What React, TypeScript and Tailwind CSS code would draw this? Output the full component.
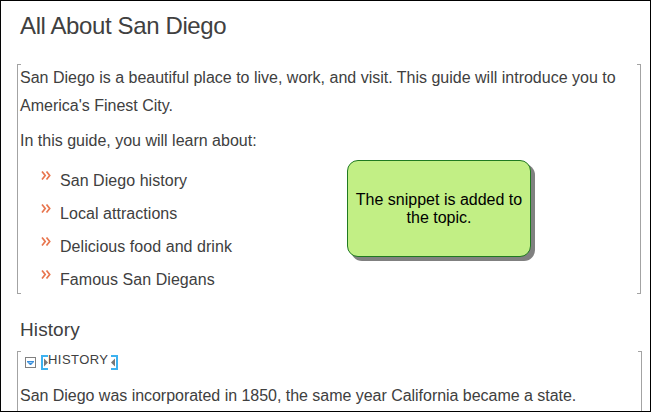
import type { ReactNode } from "react";

const topics = ["San Diego history", "Local attractions", "Delicious food and drink", "Famous San Diegans"];

function Chevrons() {
  return (
    <svg width="10" height="9" viewBox="0 0 10 9" fill="none" stroke="#e8764f" strokeWidth="1.7" className="mt-[-10px] shrink-0">
      <path d="M1 0.5 L4.2 4.5 L1 8.5 M5.5 0.5 L8.7 4.5 L5.5 8.5" />
    </svg>
  );
}

function Snippet({ children, className }: { children: ReactNode; className: string }) {
  return (
    <section className={`flex ${className}`}>
      <div className="w-1 shrink-0 border-y border-l border-[#a3a3a3]" />
      <div className="-ml-px min-w-0 flex-1 whitespace-nowrap">{children}</div>
      <div className="w-1 shrink-0 border-y border-r border-[#a3a3a3]" />
    </section>
  );
}

function SnippetTag() {
  return (
    <div className="flex h-[23px] pl-[5px] pt-[4px]">
      <svg width="11" height="11" viewBox="0 0 11 11" className="mt-[2px] shrink-0">
        <rect x="0.5" y="0.5" width="10" height="10" fill="#fff" stroke="#808080" />
        <path d="M2 4h7v1l-3 3h-1l-3-3z" fill="#3a8edb" />
        <path d="M3 5h5l-2 1h-1z" fill="#a9d5f5" />
      </svg>
      <svg width="7" height="15" viewBox="0 0 7 15" className="ml-[5px] shrink-0">
        <path d="M7 1H1V14H7" fill="none" stroke="#3db2f0" strokeWidth="2" />
        <path d="M3 3.5L7 7.5L3 11.5z" fill="#777" />
      </svg>
      <span className="mt-[-3px] w-[61px] text-[13px] leading-[16px] tracking-[0.45px]">HISTORY</span>
      <svg width="9" height="15" viewBox="0 0 9 15" className="shrink-0">
        <path d="M2 1H8V14H2" fill="none" stroke="#3db2f0" strokeWidth="2" />
        <path d="M6 3.5L2 7.5L6 11.5z" fill="#777" />
      </svg>
    </div>
  );
}

export default function App() {
  return (
    <main className="relative flex h-[412px] w-[651px] overflow-hidden border border-black bg-white font-['Liberation_Sans',Arial,sans-serif] text-base text-[#404040]">
      <div className="w-[9px] shrink-0 bg-[#fcfcfc]" />
      <div className="min-w-0 flex-1 pl-[7px]">
        <h1 className="ml-[3px] mt-[9px] h-[54px] text-2xl leading-[32px] tracking-[-0.38px]">All About San Diego</h1>
        <Snippet className="h-[230px] w-[624px]">
          <p className="leading-[28px]">
            San Diego is a beautiful place to live, work, and visit. This guide will introduce you to
            <br />
            America's Finest City.
          </p>
          <p className="mt-[7px] leading-[28px]">In this guide, you will learn about:</p>
          <ul className="mt-[9px] pl-[21px]">
            {topics.map((topic) => (
              <li key={topic} className="flex h-[33px] items-center gap-[9px]">
                <Chevrons />
                <span className="tracking-[0.05px]">{topic}</span>
              </li>
            ))}
          </ul>
        </Snippet>
        <h2 className="ml-[3px] mt-[23px] h-[34px] text-[19px] leading-[26px] tracking-[0.1px]">History</h2>
        <Snippet className="h-[80px] w-[625px]">
          <SnippetTag />
          <p className="mt-[8px] leading-[28px] tracking-[-0.03px]">San Diego was incorporated in 1850, the same year California became a state.</p>
        </Snippet>
      </div>
      <aside className="absolute left-[346px] top-[159px] flex h-[97px] w-[184px] items-center justify-center rounded-[11px] border border-[#207a20] bg-[#c2ef85] text-center leading-[18px] text-black shadow-[4px_4px_0_0_#808080]">
        <p>
          The snippet is added to
          <br />
          the topic.
        </p>
      </aside>
    </main>
  );
}
